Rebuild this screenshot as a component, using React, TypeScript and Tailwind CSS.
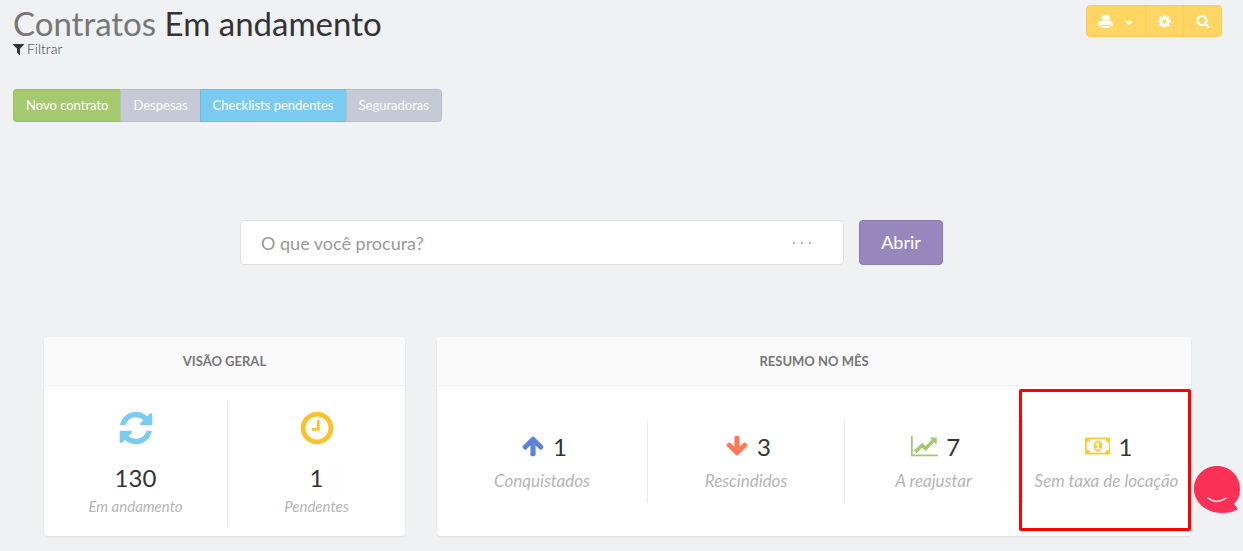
import type { ReactNode } from 'react'

interface IconProps {
  path: string
  className?: string
  width?: number
}

interface Stat {
  icon: string
  iconWidth?: number
  iconClass: string
  value: number
  label: string
}

const ICONS = {
  filter: 'M1403 295q17 41-14 70l-493 493v742q0 42-39 59-13 5-25 5-27 0-45-19l-256-256q-19-19-19-45v-486l-493-493q-31-29-14-70 17-39 59-39h1280q42 0 59 39z',
  print: 'M448 128h768l192 192v448h-960zM288 832h1216q256 0 256 256v384h-288v-192h-1152v192h-288v-384q0-256 256-256zM448 1408h896v256h-896z',
  cog: 'M1152 896q0-106-75-181t-181-75-181 75-75 181 75 181 181 75 181-75 75-181zm512-109v222q0 12-8 23t-20 13l-185 28q-19 54-39 91 35 50 107 138 10 12 10 25t-9 23q-27 37-99 108t-94 71q-12 0-26-9l-138-108q-44 23-91 38-16 136-29 186-7 28-36 28h-222q-14 0-24.5-8.5t-11.5-21.5l-28-184q-49-16-90-37l-141 107q-10 9-25 9-14 0-25-11-126-114-165-168-7-10-7-23 0-12 8-23 15-21 51-66.5t54-70.5q-27-50-41-99l-183-27q-13-2-21-12.5t-8-23.5v-222q0-12 8-23t19-13l186-28q14-46 39-92-40-57-107-138-10-12-10-24 0-10 9-23 26-36 98.5-107.5t94.5-71.5q13 0 26 10l138 107q44-23 91-38 16-136 29-186 7-28 36-28h222q14 0 24.5 8.5t11.5 21.5l28 184q49 16 90 37l142-107q9-9 24-9 13 0 25 10 129 119 165 170 7 8 7 22 0 12-8 23-15 21-51 66.5t-54 70.5q26 50 41 98l183 28q13 2 21 12.5t8 23.5z',
  search: 'M1216 832q0-185-131.5-316.5t-316.5-131.5-316.5 131.5-131.5 316.5 131.5 316.5 316.5 131.5 316.5-131.5 131.5-316.5zm512 832q0 52-38 90t-90 38q-54 0-90-38l-343-342q-179 124-399 124-143 0-273.5-55.5t-225-150-150-225-55.5-273.5 55.5-273.5 150-225 225-150 273.5-55.5 273.5 55.5 225 150 150 225 55.5 273.5q0 220-124 399l343 343q37 37 37 90z',
  refresh: 'M1639 1056q0 5-1 7-64 268-268 434.5t-478 166.5q-146 0-282.5-55t-243.5-157l-129 129q-19 19-45 19t-45-19-19-45v-448q0-26 19-45t45-19h448q26 0 45 19t19 45-19 45l-137 137q71 66 161 102t187 36q134 0 250-65t186-179q11-17 53-117 8-23 30-23h192q13 0 22.5 9.5t9.5 22.5zm25-800v448q0 26-19 45t-45 19h-448q-26 0-45-19t-19-45 19-45l138-138q-148-137-349-137-134 0-250 65t-186 179q-11 17-53 117-8 23-30 23h-199q-13 0-22.5-9.5t-9.5-22.5v-7q65-268 270-434.5t480-166.5q146 0 284 55.5t245 156.5l130-129q19-19 45-19t45 19 19 45z',
  clock: 'M1024 544v448q0 14-9 23t-23 9h-320q-14 0-23-9t-9-23v-64q0-14 9-23t23-9h224v-352q0-14 9-23t23-9h64q14 0 23 9t9 23zm416 352q0-148-73-273t-198-198-273-73-273 73-198 198-73 273 73 273 198 198 273 73 273-73 198-198 73-273zm224 0q0 209-103 385.5t-279.5 279.5-385.5 103-385.5-103-279.5-279.5-103-385.5 103-385.5 279.5-279.5 385.5-103 385.5 103 279.5 279.5 103 385.5z',
  arrowUp: 'M1675 971q0 51-37 90l-75 75q-38 38-91 38-54 0-90-38l-294-293v704q0 52-37.5 84.5t-90.5 32.5h-128q-53 0-90.5-32.5t-37.5-84.5v-704l-294 293q-36 38-90 38t-90-38l-75-75q-38-38-38-90 0-53 38-91l651-651q35-37 90-37 54 0 91 37l651 651q37 39 37 91z',
  arrowDown: 'M1675 832q0 53-37 90l-651 652q-39 37-91 37-53 0-90-37l-651-652q-38-36-38-90 0-53 38-91l74-75q39-37 91-37 53 0 90 37l294 294v-704q0-52 38-90t90-38h128q52 0 90 38t38 90v704l294-294q37-37 90-37 52 0 91 37l75 75q37 39 37 91z',
  chart: 'M2048 1536v128h-2048v-1536h128v1408h1920zm-128-1248v435q0 21-19.5 29.5t-35.5-7.5l-121-121-633 633q-10 10-23 10t-23-10l-233-233-416 416-192-192 585-585q10-10 23-10t23 10l233 233 464-464-121-121q-16-16-7.5-35.5t29.5-19.5h435q14 0 23 9t9 23z',
  money: 'M768 1152h384v-96h-128v-448h-114l-148 137 77 80q42-37 55-57h2v288h-128v96zm512-256q0 70-21 142t-59.5 134-101.5 101-138 39-138-39-101.5-101-59.5-134-21-142 21-142 59.5-134 101.5-101 138-39 138 39 101.5 101 59.5 134 21 142zm512 256v-512q-106 0-181-75t-75-181h-1152q0 106-75 181t-181 75v512q106 0 181 75t75 181h1152q0-106 75-181t181-75zm128-832v1152q0 26-19 45t-45 19h-1792q-26 0-45-19t-19-45v-1152q0-26 19-45t45-19h1792q26 0 45 19t19 45z',
}

const OVERVIEW: Stat[] = [
  { icon: ICONS.refresh, iconClass: 'text-[#7bcbf0]', value: 130, label: 'Em andamento' },
  { icon: ICONS.clock, iconClass: 'text-[#ffc02d]', value: 1, label: 'Pendentes' },
]

const MONTH: Stat[] = [
  { icon: ICONS.arrowUp, iconClass: 'text-[#5d82d9]', value: 1, label: 'Conquistados' },
  { icon: ICONS.arrowDown, iconClass: 'text-[#ff7857]', value: 3, label: 'Rescindidos' },
  { icon: ICONS.chart, iconWidth: 2048, iconClass: 'text-[#a5c96f]', value: 7, label: 'A reajustar' },
  { icon: ICONS.money, iconWidth: 1920, iconClass: 'text-[#ffc936]', value: 1, label: 'Sem taxa de locação' },
]

const TABS = [
  { label: 'Novo contrato', className: 'rounded-l bg-[#a5c96f] border-[#97bf5a]' },
  { label: 'Despesas', className: 'bg-[#c6cad6] border-[#b8bccb]' },
  { label: 'Checklists pendentes', className: 'bg-[#7bcbf0] border-[#62bfea]' },
  { label: 'Seguradoras', className: 'rounded-r border-r bg-[#c6cad6] border-[#b8bccb]' },
]

function Icon({ path, className, width = 1792 }: IconProps) {
  return (
    <svg viewBox={`0 0 ${width} 1792`} fill="currentColor" aria-hidden="true" className={className}>
      <path d={path} />
    </svg>
  )
}

function Card({ title, children }: { title: string; children: ReactNode }) {
  return (
    <section className="h-[199px] flex flex-col rounded bg-white shadow-[0_1px_2px_rgba(60,70,90,0.12)]">
      <h2 className="h-[49px] flex items-center justify-center pt-0.5 rounded-t border-b border-[#eff0f3] bg-[#fafafa] text-[13px] font-bold text-[#777]">
        {title}
      </h2>
      {children}
    </section>
  )
}

export default function App() {
  return (
    <div className="min-h-screen bg-[#f0f1f3] text-[#333] font-['Lato',sans-serif]">
      {/* Header */}
      <header className="flex items-start justify-between pl-[13px] pr-[21px] pt-[5px]">
        <div>
          <h1 className="text-[33px] leading-9 text-[#333]">
            <span className="text-[#777]">Contratos</span> Em andamento
          </h1>
          <a href="#filtrar" className="flex items-center gap-[3px] text-sm leading-4 font-light">
            <Icon path={ICONS.filter} width={1408} className="h-[14px] w-[11px]" />
            Filtrar
          </a>
        </div>
        <div className="flex h-8 rounded border border-[#ffcf4b] bg-[#ffd663] text-white">
          <button aria-label="Imprimir" className="flex w-[58px] items-center gap-3 pl-[11px]">
            <Icon path={ICONS.print} className="size-[15px]" />
            <span className="mt-1 border-x-4 border-t-4 border-x-transparent border-t-white" />
          </button>
          <button aria-label="Configurações" className="flex w-[38px] items-center justify-center border-l border-[#ffcf4b]">
            <Icon path={ICONS.cog} className="size-[15px]" />
          </button>
          <button aria-label="Buscar" className="flex w-[38px] items-center justify-center border-l border-[#ffcf4b]">
            <Icon path={ICONS.search} className="size-[14px]" />
          </button>
        </div>
      </header>

      {/* Actions */}
      <nav className="flex pl-[13px] mt-8">
        {TABS.map(tab => (
          <button
            key={tab.label}
            className={`h-[33px] px-3 border-y border-l text-[13px] text-white ${tab.className}`}
          >
            {tab.label}
          </button>
        ))}
      </nav>

      {/* Search */}
      <form className="flex gap-[15px] mt-[98px] pl-60 pr-[300px]">
        <div className="flex flex-1 h-[45px] items-center rounded border border-[#dddfe2] bg-white">
          <input
            aria-label="O que você procura?"
            placeholder="O que você procura?"
            className="flex-1 min-w-0 h-full pl-5 text-lg outline-none placeholder:text-[#999]"
          />
          <button type="button" aria-label="Mais opções" className="flex gap-1.5 mr-8">
            <span className="size-0.5 rounded-full bg-[#999]" />
            <span className="size-0.5 rounded-full bg-[#999]" />
            <span className="size-0.5 rounded-full bg-[#999]" />
          </button>
        </div>
        <button type="button" className="h-[45px] w-[84px] pb-0.5 rounded border border-[#8b78b3] bg-[#9887bd] text-lg text-white">
          Abrir
        </button>
      </form>

      {/* Panels */}
      <main className="flex pl-7 pr-9 mt-[72px]">
        <div className="w-1/3 px-4">
          <Card title="VISÃO GERAL">
            <div className="grid grid-cols-[184fr_177fr] mt-[15px]">
              {OVERVIEW.map(stat => (
                <div key={stat.label} className="flex flex-col h-[126px] items-center border-r border-[#e9eaed] last:border-r-0">
                  <Icon path={stat.icon} className={`size-[38px] mt-2 ${stat.iconClass}`} />
                  <p className="mt-[15px] text-2xl leading-8">{stat.value}</p>
                  <p className="text-[15px] leading-6 italic text-[#b5b5b5]">{stat.label}</p>
                </div>
              ))}
            </div>
          </Card>
        </div>

        <div className="w-2/3 px-4">
          <Card title="RESUMO NO MÊS">
            <div className="relative grid grid-cols-[211fr_197fr_178fr_168fr] flex-1 items-center">
              {MONTH.map(stat => (
                <div key={stat.label} className="flex flex-col h-[83px] items-center pt-[11px] border-r border-[#e9eaed] last:border-r-0">
                  <p className="flex items-center gap-2 pl-1 text-2xl leading-8">
                    <Icon path={stat.icon} width={stat.iconWidth} className={`h-6 mb-0.5 ${stat.iconClass}`} />
                    {stat.value}
                  </p>
                  <p className="mt-1 text-[17px] leading-7 italic text-[#b5b5b5] whitespace-nowrap">{stat.label}</p>
                </div>
              ))}
              {/* Highlight over the last cell */}
              <div className="absolute right-0 top-[3px] h-[142px] w-[172px] rounded-xs border-3 border-[#ff0000]" />
            </div>
          </Card>
        </div>
      </main>

      {/* Chat launcher */}
      <button aria-label="Abrir chat" className="fixed right-[3px] bottom-[37px]">
        <svg viewBox="0 0 46 48" className="w-[46px] h-12">
          <path d="M23 0C36 0 46 10 46 23c0 6-2 11-6 15l4 5c-5 3-10 4-16 4C12 47 0 36 0 23 0 10 10 0 23 0Z" fill="#fb3056" />
          <path d="M14 32q9 7 18 0" fill="none" stroke="#fff" strokeWidth="1.5" strokeLinecap="round" />
        </svg>
      </button>
    </div>
  )
}
